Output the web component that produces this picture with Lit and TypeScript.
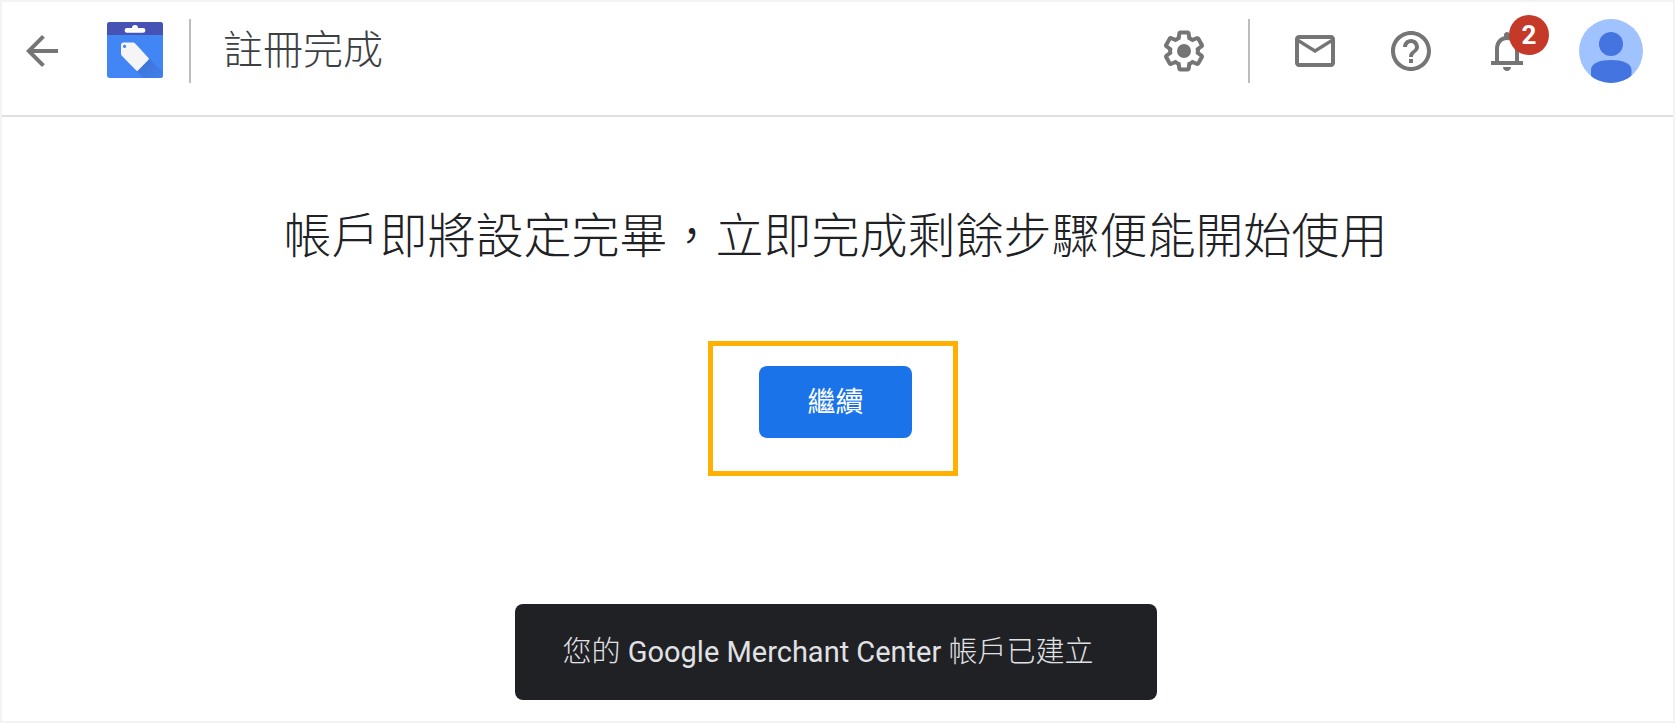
import { LitElement, html, css, svg } from "lit";
import { customElement, property } from "lit/decorators.js";

const ICONS = {
  back: svg`<path d="M20 11H7.83l5.59-5.59L12 4l-8 8 8 8 1.41-1.41L7.83 13H20v-2z"/>`,
  settings: svg`
    <path fill-rule="evenodd" d="M13.85 22.25h-3.7c-.74 0-1.36-.54-1.45-1.27l-.27-1.89c-.27-.14-.53-.29-.79-.46l-1.8.72c-.7.26-1.47-.03-1.81-.65L2.2 15.53c-.35-.66-.2-1.44.36-1.88l1.53-1.19c-.01-.15-.02-.3-.02-.46 0-.15.01-.31.02-.46l-1.52-1.19c-.59-.45-.74-1.26-.37-1.88l1.85-3.19c.34-.62 1.11-.9 1.79-.63l1.81.73c.26-.17.52-.32.78-.46l.27-1.91c.09-.7.71-1.25 1.44-1.25h3.7c.74 0 1.36.54 1.45 1.27l.27 1.89c.27.14.53.29.79.46l1.8-.72c.71-.26 1.48.03 1.82.65l1.84 3.18c.36.66.2 1.44-.36 1.88l-1.52 1.19c.01.15.02.3.02.46s-.01.31-.02.46l1.52 1.19c.56.45.72 1.23.37 1.86l-1.86 3.22c-.34.62-1.11.9-1.8.63l-1.8-.72c-.26.17-.52.32-.78.46l-.27 1.91c-.1.68-.72 1.22-1.46 1.22zm-3.23-2h2.76l.37-2.55.53-.22c.44-.18.88-.44 1.34-.78l.45-.34 2.38.96 1.38-2.4-2.03-1.58.07-.56c.03-.26.06-.51.06-.78s-.03-.53-.06-.78l-.07-.56 2.03-1.58-1.39-2.4-2.39.96-.45-.35c-.42-.32-.87-.58-1.33-.77l-.52-.22-.37-2.55h-2.76l-.37 2.55-.53.21c-.44.19-.88.44-1.34.79l-.45.33-2.38-.95-1.39 2.39 2.03 1.58-.07.56a7 7 0 0 0-.06.79c0 .26.02.53.06.78l.07.56-2.03 1.58 1.38 2.4 2.39-.96.45.35c.43.33.86.58 1.33.77l.53.22.38 2.55z"/>
    <circle cx="12" cy="12" r="3.5"/>`,
  mail: svg`<path d="M20 4H4c-1.1 0-2 .9-2 2v12c0 1.1.9 2 2 2h16c1.1 0 2-.9 2-2V6c0-1.1-.9-2-2-2zm0 2v.01L12 11 4 6.01V6h16zM4 18V8l8 5 8-5v10H4z"/>`,
  help: svg`<path d="M11 18h2v-2h-2v2zm1-16C6.48 2 2 6.48 2 12s4.48 10 10 10 10-4.48 10-10S17.52 2 12 2zm0 18c-4.41 0-8-3.59-8-8s3.59-8 8-8 8 3.59 8 8-3.59 8-8 8zm0-14c-2.21 0-4 1.79-4 4h2c0-1.1.9-2 2-2s2 .9 2 2c0 2-3 1.75-3 5h2c0-2.25 3-2.5 3-5 0-2.21-1.79-4-4-4z"/>`,
  bell: svg`<path d="M18 17v-6c0-3.07-1.63-5.64-4.5-6.32V4c0-.83-.67-1.5-1.5-1.5s-1.5.67-1.5 1.5v.68C7.64 5.36 6 7.92 6 11v6H4v2h16v-2h-2zm-2 0H8v-6c0-2.48 1.51-4.5 4-4.5s4 2.02 4 4.5v6zm-4 5c1.1 0 2-.9 2-2h-4c0 1.1.89 2 2 2z"/>`,
};

@customElement("icon-button")
class IconButton extends LitElement {
  @property() icon: keyof typeof ICONS = "back";
  @property() label = "";
  @property({ type: Number }) count = 0;

  static styles = css`
    :host { display: block; }
    .button {
      position: relative;
      display: block;
      padding: 0;
      border: 0;
      background: none;
      color: #757575;
      cursor: pointer;
    }
    .glyph { display: block; width: 48px; height: 48px; fill: currentColor; }
    .badge {
      position: absolute;
      top: -12px;
      right: -18px;
      width: 40px;
      height: 40px;
      border-radius: 50%;
      background: #c53929;
      color: #fff;
      font: 700 26px/40px Roboto, sans-serif;
      text-align: center;
    }
  `;

  render() {
    return html`<button class="button" type="button" aria-label=${this.label}>
      <svg class="glyph" viewBox="0 0 24 24" aria-hidden="true">${ICONS[this.icon]}</svg>
      ${this.count ? html`<span class="badge">${this.count}</span>` : null}
    </button>`;
  }
}

@customElement("app-header")
class AppHeader extends LitElement {
  static styles = css`
    :host { display: block; }
    .bar {
      display: flex;
      align-items: center;
      justify-content: space-between;
      padding: 17px 30px 32px 16px;
      border-bottom: 2px solid #e0e0e0;
    }
    .group { display: flex; align-items: center; }
    .logo { display: block; width: 56px; height: 56px; margin: 0 0 2px 41px; }
    .rule { width: 2px; height: 64px; background: #bdbdbd; }
    .start .rule { margin: 0 32px 0 26px; }
    .end .rule { margin: 0 41px 0 40px; }
    .title {
      margin: 0;
      font-size: 40px;
      line-height: 64px;
      font-weight: 300;
      color: #3c4043;
    }
    .tools { display: flex; gap: 48px; }
    .account {
      margin-left: 48px;
      padding: 0;
      border: 0;
      background: none;
      cursor: pointer;
    }
    .avatar { display: block; width: 64px; height: 64px; }
  `;

  render() {
    return html`<header class="bar">
      <div class="group start">
        <icon-button icon="back" label="返回"></icon-button>
        <svg class="logo" viewBox="0 0 56 56" aria-hidden="true">
          <defs>
            <clipPath id="card"><rect width="56" height="56" rx="3"/></clipPath>
            <linearGradient id="shade" x1="0" y1="0" x2="1" y2="1">
              <stop offset="0" stop-color="#3a70d6"/><stop offset="1" stop-color="#4380ea"/>
            </linearGradient>
          </defs>
          <g clip-path="url(#card)">
            <rect width="56" height="56" fill="#4285f4"/>
            <path d="M42 37L56 50V56H37L30 49z" fill="url(#shade)"/>
            <rect width="56" height="13" fill="#4653b5"/>
          </g>
          <path d="M20 6h5a3 3 0 0 1 6 0h5a2.300 2.300 0 0 1 0 4.800H20a2.300 2.300 0 0 1 0-4.800z" fill="#fff"/>
          <path fill-rule="evenodd" fill="#f5f5f5" d="M16.500 20.500H26q1.300 0 2.200 1L41.500 36q.8.900 0 1.800L31 48.600q-.9.800-1.700 0L14.800 33.800q-.8-.8-.8-2V23q0-2.500 2.500-2.500zM17.600 22.800a1.600 1.600 0 1 0 .01 0z"/>
        </svg>
        <span class="rule"></span>
        <h1 class="title">註冊完成</h1>
      </div>
      <div class="group end">
        <icon-button icon="settings" label="設定"></icon-button>
        <span class="rule"></span>
        <div class="tools">
          <icon-button icon="mail" label="郵件"></icon-button>
          <icon-button icon="help" label="說明"></icon-button>
          <icon-button icon="bell" label="通知" .count=${2}></icon-button>
        </div>
        <button class="account" type="button" aria-label="帳戶">
          <svg class="avatar" viewBox="0 0 64 64" aria-hidden="true">
            <defs><clipPath id="round"><circle cx="32" cy="32" r="32"/></clipPath></defs>
            <g clip-path="url(#round)">
              <rect width="64" height="64" fill="#a0c3ff"/>
              <circle cx="32" cy="25" r="12" fill="#4374e0"/>
              <path d="M12 64V51C12 44 21 41 32 41s20.500 3 20.500 10v13z" fill="#4374e0"/>
            </g>
          </svg>
        </button>
      </div>
    </header>`;
  }
}

@customElement("app-root")
class AppRoot extends LitElement {
  static styles = css`
    :host {
      display: flex;
      flex-direction: column;
      box-sizing: border-box;
      min-height: 100vh;
      border: 2px solid #f3f3f3;
      background: #fff;
      color: #202124;
      font-family: Roboto, "Noto Sans CJK TC", sans-serif;
    }
    .content {
      flex: 1;
      display: flex;
      flex-direction: column;
      align-items: center;
      padding: 88px 4px 21px 0;
    }
    .headline {
      margin: 0;
      font-size: 48px;
      line-height: 64px;
      font-weight: 300;
      text-align: center;
    }
    .action { position: relative; margin-top: 97px; }
    .primary {
      display: block;
      height: 72px;
      padding: 0 48px 4px;
      border: 0;
      border-radius: 8px;
      background: #1a73e8;
      color: #fff;
      font: inherit;
      font-size: 28px;
      font-weight: 400;
      cursor: pointer;
    }
    .highlight {
      position: absolute;
      inset: -25px -46px -38px -51px;
      border: 5px solid #ffb000;
      pointer-events: none;
    }
    .toast {
      box-sizing: border-box;
      width: 642px;
      max-width: 100%;
      margin-top: auto;
      padding: 28px 48px;
      border-radius: 8px;
      background: #202124;
      color: #e0e2e6;
      font-size: 29px;
      line-height: 40px;
    }
    .light { font-weight: 300; }
  `;

  render() {
    return html`
      <app-header></app-header>
      <main class="content">
        <h2 class="headline">帳戶即將設定完畢，立即完成剩餘步驟便能開始使用</h2>
        <div class="action">
          <button class="primary" type="button">繼續</button>
          <span class="highlight"></span>
        </div>
        <div class="toast" role="status">
          <span class="light">您的</span> Google Merchant Center <span class="light">帳戶已建立</span>
        </div>
      </main>
    `;
  }
}
